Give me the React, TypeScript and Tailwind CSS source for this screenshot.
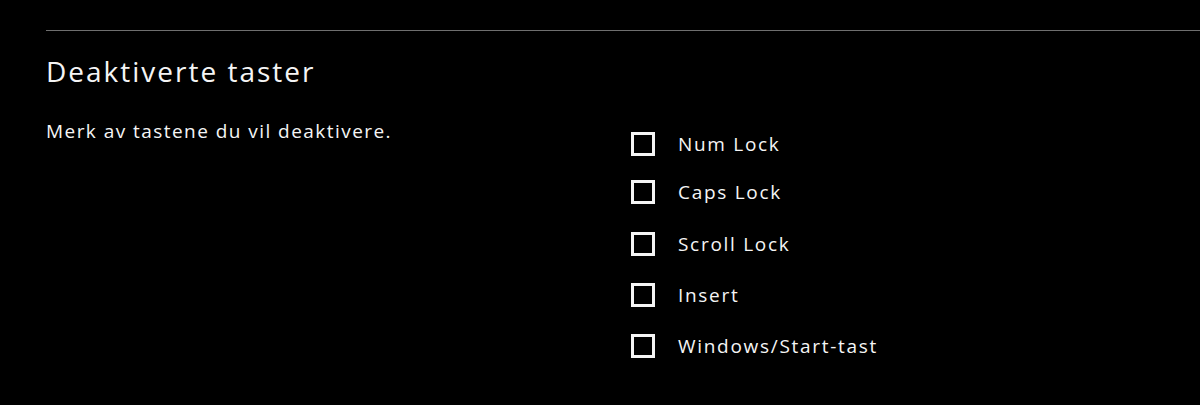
const keys = [
  { label: "Num Lock", gap: "mt-0" },
  { label: "Caps Lock", gap: "mt-[24px]" },
  { label: "Scroll Lock", gap: "mt-[28px]" },
  { label: "Insert", gap: "mt-[27px]" },
  { label: "Windows/Start-tast", gap: "mt-[27px]" },
];

export default function App() {
  return (
    <div className="min-h-screen bg-black pl-[46px] pt-[30px] text-[#f5f5f5] font-['Open_Sans',sans-serif]">
      <div className="h-px bg-[#6f6f6f]" />

      <h2 className="mt-[23px] text-[28px] leading-[34px] font-normal tracking-[2px]">Deaktiverte taster</h2>

      <div className="mt-[31px] flex items-start">
        <p className="w-[585px] shrink-0 text-[19px] leading-[24px] tracking-[1.45px]">Merk av tastene du vil deaktivere.</p>

        <ul className="pt-[13px]">
          {keys.map((k) => (
            <li key={k.label} className={`flex h-[24px] items-center ${k.gap}`}>
              <span className="h-[24px] w-[24px] shrink-0 border-[3px] border-[#f5f5f5]" />
              <span className="ml-[23px] text-[19px] leading-[24px] tracking-[1.7px]">{k.label}</span>
            </li>
          ))}
        </ul>
      </div>
    </div>
  );
}
